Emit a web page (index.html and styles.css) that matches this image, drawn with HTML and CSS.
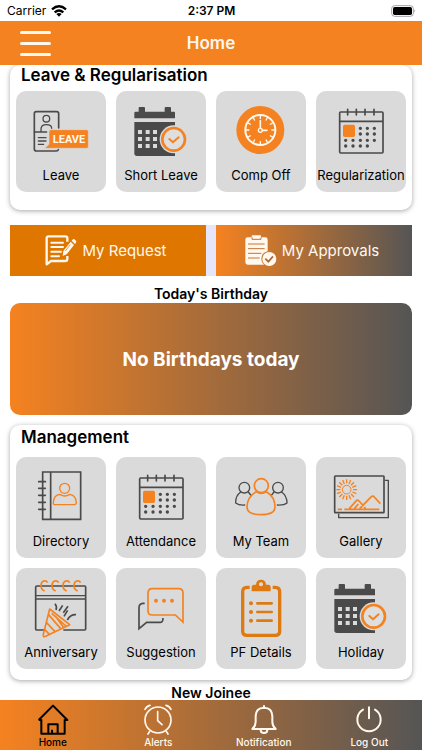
FILE: index.html
```html
<!DOCTYPE html>
<html lang="en">
<head>
<meta charset="utf-8">
<meta name="viewport" content="width=device-width, initial-scale=1">
<title>Home</title>
<link rel="stylesheet" href="styles.css">
</head>
<body>
<svg class="sprite" aria-hidden="true">
  <symbol id="calendar-check" viewBox="393 123 180 180">
    <g fill="#4a4a4b">
      <path d="M403 158Q403 155 407 155H416V144Q416 141 419 141H432Q435 141 435 144V155H494V144Q494 141 497 141H510Q513 141 513 144V155H522Q525 155 525 158V175H403Z"/>
      <path d="M403 186H525V288H411Q403 288 403 280Z"/>
    </g>
    <path fill="#dadada" d="M414 210h12v12h-12zM437 210h12v12h-12zM459 210h12v12h-12zM414 231h12v12h-12zM437 231h12v12h-12zM459 231h12v12h-12zM414 252h12v12h-12zM437 252h12v12h-12zM459 252h12v12h-12z"/>
    <circle cx="521" cy="238" r="42" fill="#dadada"/>
    <circle cx="521" cy="238" r="34" fill="#dedede" stroke="#f58220" stroke-width="8"/>
    <path d="M508 237L519 247L536 232" fill="none" stroke="#f58220" stroke-width="6" stroke-linecap="round" stroke-linejoin="round"/>
  </symbol>
  <symbol id="calendar-dots" viewBox="363 123 180 180">
    <g fill="none" stroke="#4a4a4b" stroke-width="5">
      <rect x="389" y="156" width="130" height="123" rx="3"/>
      <path d="M389 184H519"/>
      <path stroke-linecap="round" d="M413 148V165M439 148V165M465 148V165M492 148V165"/>
      <path stroke-width="10" stroke-linecap="round" d="M451 205h.1M472 205h.1M493 205h.1M451 222h.1M472 222h.1M493 222h.1M407 241h.1M429 241h.1M451 241h.1M472 241h.1M493 241h.1M407 258h.1M429 258h.1M451 258h.1M472 258h.1"/>
    </g>
    <rect x="399" y="194" width="36" height="37" rx="5" fill="#f58220"/>
  </symbol>
</svg>

<div class="app">
  <div class="status">
    <div class="carrier">Carrier
      <svg class="wifi" viewBox="0 0 48 36" aria-hidden="true">
        <g fill="none" stroke="#000" stroke-width="7"><path d="M3 13Q24-5 45 13"/><path d="M11 22Q24 11 37 22"/></g>
        <path d="M24 35L16 27Q24 21 32 27Z"/>
      </svg>
    </div>
    <div class="clock">2:37 PM</div>
    <div class="power">
      <svg class="battery" viewBox="0 0 75 36" aria-hidden="true">
        <rect x="2" y="2" width="65" height="32" rx="9" fill="none" stroke="#a3a3a3" stroke-width="3"/>
        <rect x="6" y="6" width="57" height="24" rx="5"/><path d="M70 13Q75 18 70 23Z" fill="#a3a3a3"/>
      </svg>
    </div>
  </div>

  <header class="topbar">
    <button class="menu" type="button" aria-label="Menu"><span></span><span></span><span></span></button>
    <h1>Home</h1>
  </header>

  <main>
    <section class="card card-leave">
      <h2>Leave &amp; Regularisation</h2>
      <div class="tiles">
        <button class="tile" type="button">
          <svg viewBox="93 123 180 180" aria-hidden="true">
            <g fill="none" stroke="#4a4a4b" stroke-width="5" stroke-linecap="round">
              <path d="M175 269Q174 273 169 273H109Q103 273 103 267V161Q103 155 109 155H170Q176 155 176 161V204"/>
              <circle cx="139" cy="176" r="10" stroke-width="4"/>
              <path stroke-width="4" d="M123 213V208Q123 194 139 194T155 205M103 216H140M115 233H138M115 243H138M115 253H131"/>
            </g>
            <path fill="#f58220" stroke="#dadada" stroke-width="2" d="M153 209H260Q265 209 265 214V260Q265 265 260 265H134L147 253V215Q147 209 153 209Z"/>
            <text class="leave-word" x="207" y="249" text-anchor="middle">LEAVE</text>
          </svg>
          <span>Leave</span>
        </button>
        <button class="tile" type="button"><svg aria-hidden="true"><use href="#calendar-check"/></svg><span>Short Leave</span></button>
        <button class="tile" type="button">
          <svg viewBox="63 123 180 180" aria-hidden="true">
            <circle cx="151" cy="210" r="72" fill="#f58220"/>
            <g fill="none" stroke="#fff8ec" stroke-width="5">
              <circle cx="151" cy="210" r="45" stroke-width="6"/>
              <circle cx="151" cy="211" r="6" stroke-width="4"/>
              <path d="M151 182V205M157 211H171" stroke-linecap="round"/>
              <path stroke-width="4" d="M151 167V177M151 243V253M108 210H118M184 210H194M129.500 172.800L134.500 181.400M167.500 238.600L172.500 247.200M113.800 188.500L122.400 193.500M179.600 226.500L188.200 231.500M113.800 231.500L122.400 226.500M179.600 193.500L188.200 188.500M129.500 247.200L134.500 238.600M167.500 181.400L172.500 172.800"/>
            </g>
          </svg>
          <span>Comp Off</span>
        </button>
        <button class="tile" type="button"><svg aria-hidden="true"><use href="#calendar-dots"/></svg><span>Regularization</span></button>
      </div>
    </section>

    <div class="actions">
      <button class="action request" type="button">
        <svg viewBox="130 74 96 96" aria-hidden="true">
          <g fill="none" stroke="#fff8ee" stroke-width="7" stroke-linejoin="round">
            <path d="M197 94V83Q197 78 191 78H141Q135 78 135 84V162L148 152H190Q197 152 197 145V137"/>
            <path stroke-linecap="round" stroke-width="6" d="M149 97H184M149 110H184M149 124H178M149 138H172"/>
          </g>
          <path fill="#fff8ee" d="M207 94L217 104L195 132L183 137L185 122ZM210 91L214 87Q217 85 220 88L223 91Q225 94 223 97L220 101Z"/>
          <path d="M206 103L191 122" stroke="#de7600" stroke-width="2"/>
        </svg>
        My Request
      </button>
      <button class="action approvals" type="button">
        <svg viewBox="730 74 96 96" aria-hidden="true">
          <path fill="#fff8ee" d="M738 81H750V77Q750 75 752 75H776Q778 75 778 77V81H791Q798 81 798 88V123Q779 127 779 146Q779 157 787 163H738Q731 163 731 156V88Q731 81 738 81Z"/>
          <path d="M751 81V87H778V81M739 101H789M739 115H789M739 129H779M739 143H774" fill="none" stroke="#c97331" stroke-width="3"/>
          <circle cx="803" cy="146" r="21" fill="#fff8ee"/>
          <path d="M791 145L800 154L814 138" fill="none" stroke="#a66a3c" stroke-width="5"/>
        </svg>
        My Approvals
      </button>
    </div>

    <h3>Today's Birthday</h3>
    <div class="birthday">No Birthdays today</div>

    <section class="card card-management">
      <h2>Management</h2>
      <div class="tiles">
        <button class="tile" type="button">
          <svg viewBox="93 81 180 180" aria-hidden="true">
            <g fill="none" stroke="#4a4a4b" stroke-width="5">
              <path d="M128 96H242V238H128ZM152 96V238"/>
              <path stroke-linecap="round" d="M116 125H136M116 145H136M116 166H136M116 187H136M116 208H136"/>
            </g>
            <g fill="none" stroke="#f58220" stroke-width="4">
              <circle cx="194" cy="145" r="15"/>
              <path d="M165 194Q159 194 160 187Q161 165 180 163Q194 173 209 163Q227 165 229 187Q229 194 223 194Z"/>
            </g>
          </svg>
          <span>Directory</span>
        </button>
        <button class="tile" type="button"><svg aria-hidden="true"><use href="#calendar-dots"/></svg><span>Attendance</span></button>
        <button class="tile" type="button">
          <svg viewBox="63 81 180 180" aria-hidden="true">
            <g fill="none" stroke="#4a4a4b" stroke-width="4" stroke-linecap="round">
              <circle cx="103" cy="143" r="16"/><circle cx="204" cy="143" r="16"/>
              <path d="M92 156Q76 168 77 189Q86 196 104 195M115 156L122 165M215 156Q231 168 231 189Q222 196 202 195M192 156L185 165"/>
            </g>
            <g fill="none" stroke="#f58220" stroke-width="5">
              <circle cx="154" cy="137" r="21"/>
              <path d="M139 155Q112 170 111 201Q111 224 153 224T195 201Q195 170 169 155Q154 166 139 155Z"/>
            </g>
          </svg>
          <span>My Team</span>
        </button>
        <button class="tile" type="button">
          <svg viewBox="363 81 180 180" aria-hidden="true">
            <g fill="none" stroke="#4a4a4b" stroke-width="5" stroke-linejoin="round">
              <rect x="374" y="108" width="148" height="110" rx="2"/>
              <path stroke-width="4" d="M525 121H535V233H386V221"/>
            </g>
            <g fill="none" stroke="#f58220" stroke-width="4">
              <circle cx="410" cy="149" r="13" stroke-width="3"/>
              <path d="M410 118V130M410 168V180M379 149H391M429 149H441M388 127L397 136M423 162L432 171M432 127L423 136M397 162L388 171M398 120L403 132M417 166L422 178M422 120L417 132M403 166L398 178M381 137L393 142M427 156L439 161M381 161L393 156M427 142L439 137"/>
              <path d="M383 208H396M403 208H508M418 206L439 182Q443 179 447 183L459 196M433 206L445 192M449 206L484 170Q489 166 493 171L511 191M463 201L466 206" stroke-width="5"/>
            </g>
          </svg>
          <span>Gallery</span>
        </button>
        <button class="tile" type="button">
          <svg viewBox="93 54 180 180" aria-hidden="true">
            <g fill="none" stroke="#4a4a4b" stroke-width="5">
              <path d="M133 210H109Q107 210 107 207V82Q107 78 111 78H254Q257 78 257 82V207Q257 210 254 210H190"/>
              <path d="M107 107H257M107 117H257" stroke-width="4"/>
              <path d="M165 131Q172 140 168 150M188 136L177 153M204 139L190 158M203 151L192 169M228 164Q211 163 202 180"/>
            </g>
            <g fill="none" stroke="#f58220" stroke-width="5" stroke-linejoin="round">
              <path d="M143 68Q139 61 131 63Q123 66 123 77T134 93M176 68Q172 61 164 63Q156 66 156 77T167 93M209 68Q205 61 197 63Q189 66 189 77T200 93M242 68Q238 61 230 63Q222 66 222 77T233 93"/>
              <path fill="#dadada" d="M149 147L209 194L137 229Q128 233 130 223Z"/>
              <path d="M145 163L182 206M139 187L165 215M134 208L148 223M155 160L198 198M166 168L192 204"/>
            </g>
          </svg>
          <span>Anniversary</span>
        </button>
        <button class="tile" type="button">
          <svg viewBox="393 54 180 180" aria-hidden="true">
            <path d="M434 130H429Q417 131 417 143V206L440 187H482Q489 187 489 174" fill="none" stroke="#4a4a4b" stroke-width="5"/>
            <path d="M457 86H536Q549 86 549 99V186L526 165H457Q444 165 444 152V99Q444 86 457 86Z" fill="none" stroke="#f58220" stroke-width="5"/>
            <g fill="#f58220"><circle cx="468" cy="122" r="6"/><circle cx="492" cy="122" r="6"/><circle cx="516" cy="122" r="6"/></g>
          </svg>
          <span>Suggestion</span>
        </button>
        <button class="tile" type="button">
          <svg viewBox="63 54 180 180" aria-hidden="true">
            <g fill="none" stroke="#de7a12" stroke-linecap="round">
              <path stroke-width="10" stroke-linecap="butt" d="M119 82H111Q98 82 98 95V213Q98 226 111 226H196Q209 226 209 213V95Q209 82 196 82H188"/>
              <path stroke-width="8" d="M142 130H185M142 156H185M142 182H185"/>
              <path stroke-width="12" d="M123 130h.1M123 156h.1M123 182h.1"/>
            </g>
            <path fill="#de7a12" fill-rule="evenodd" d="M125 94V82Q125 74 133 74H138Q139 59 153 59T168 74H174Q182 74 182 82V94ZM153 67a6 6 0 1 0 .1 0Z"/>
          </svg>
          <span>PF Details</span>
        </button>
        <button class="tile" type="button"><svg aria-hidden="true"><use href="#calendar-check"/></svg><span>Holiday</span></button>
      </div>
    </section>

    <h3 class="joinee">New Joinee</h3>
  </main>

  <nav class="tabs">
    <a class="current" href="#home">
      <svg viewBox="0 0 96 96" aria-hidden="true"><g fill="none" stroke="currentColor" stroke-width="6" stroke-linejoin="round"><path d="M13 49V92H83V49M5 51L48 8L91 51H83M5 51H13"/><path d="M34 92V64H62V92M45 92V80"/></g></svg>
      Home
    </a>
    <a href="#alerts">
      <svg viewBox="0 0 96 96" aria-hidden="true"><g fill="none" stroke="currentColor" stroke-width="5" stroke-linecap="round"><circle cx="48" cy="51" r="39"/><path d="M47 26V53L60 65M23 85L18 93M73 85L78 93M9 19Q14 9 24 7M72 7Q82 9 87 19"/></g></svg>
      Alerts
    </a>
    <a href="#notification">
      <svg viewBox="0 0 96 96" aria-hidden="true"><g fill="none" stroke="currentColor" stroke-width="6" stroke-linecap="round" stroke-linejoin="round"><path d="M48 9V13M13 78Q23 69 23 56V40Q23 15 48 14Q73 15 73 40V56Q73 69 83 78Z"/><path d="M38 80Q38 90 48 90T58 80"/></g></svg>
      Notification
    </a>
    <a href="#logout">
      <svg viewBox="0 0 96 96" aria-hidden="true"><g fill="none" stroke="currentColor" stroke-width="6" stroke-linecap="round"><path d="M48 13V46M30 20A35 35 0 1 0 66 20"/></g></svg>
      Log Out
    </a>
  </nav>
</div>
</body>
</html>
```
FILE: styles.css
```css
* {
  box-sizing: border-box;
}

body {
  margin: 0;
  background: #fff;
  color: #000;
  font-family: Inter, "Liberation Sans", sans-serif;
}

button {
  padding: 0;
  border: 0;
  color: inherit;
  font: inherit;
}

h1, h2, h3 {
  margin: 0;
  font-weight: 600;
}

.sprite {
  position: absolute;
  width: 0;
  height: 0;
}

.app {
  display: flex;
  flex-direction: column;
  height: 100vh;
}

.status {
  display: grid;
  grid-template-columns: 1fr auto 1fr;
  align-items: center;
  height: 21px;
  padding: 0 6px 0 7px;
  font-size: 12px;
}

.carrier {
  display: flex;
  align-items: center;
  gap: 5px;
}

.wifi {
  width: 16px;
  height: 12px;
}

.clock {
  font-weight: 600;
}

.power {
  display: flex;
  justify-content: flex-end;
}

.battery {
  width: 25px;
  height: 12px;
}

.topbar {
  display: grid;
  grid-template-columns: 1fr auto 1fr;
  align-items: center;
  height: 44px;
  padding: 0 20px;
  background: #f58220;
  color: #fff8ee;
}

.topbar h1 {
  font-size: 17px;
}

.menu {
  display: flex;
  flex-direction: column;
  gap: 8px;
  width: 31px;
  background: none;
}

.menu span {
  width: 100%;
  height: 3px;
  border-radius: 2px;
  background: #fff8ee;
}

main {
  flex: 1;
  min-height: 0;
  overflow: hidden;
  padding: 0 10px;
}

.card {
  padding: 0 6px;
  border-radius: 10px;
  background: #fff;
  box-shadow: 0 1px 5px rgba(0, 0, 0, 0.35);
}

.card h2 {
  padding-left: 5px;
  font-size: 17px;
  line-height: 20px;
}

.card-leave {
  padding-bottom: 18px;
}

.card-leave h2 {
  margin-bottom: 6px;
}

.card-management {
  margin-top: 10px;
  padding-top: 2px;
  padding-bottom: 11px;
}

.card-management h2 {
  margin-bottom: 10px;
}

.tiles {
  display: grid;
  grid-template-columns: repeat(4, minmax(0, 1fr));
  gap: 10px;
}

.tile {
  display: flex;
  flex-direction: column;
  align-items: center;
  gap: 4px;
  padding: 10px 0 7px;
  border-radius: 10px;
  background: #dadada;
  font-size: 13px;
  line-height: 20px;
  white-space: nowrap;
}

.tile svg {
  width: 60px;
  height: 60px;
}

.leave-word {
  fill: #fff8ee;
  font-family: Roboto, sans-serif;
  font-size: 33px;
  font-weight: 700;
}

.actions {
  display: grid;
  grid-template-columns: 1fr 1fr;
  gap: 10px;
  margin-top: 15px;
  background: #e6e6fa;
}

.action {
  display: flex;
  align-items: center;
  justify-content: center;
  gap: 5px;
  height: 51px;
  padding-right: 4px;
  color: #fff8ee;
  font-size: 15px;
}

.action svg {
  width: 32px;
  height: 32px;
}

.request {
  background: #de7600;
}

.approvals,
.birthday,
.tabs {
  background: linear-gradient(90deg, #f58220, #555);
}

h3 {
  margin-top: 9px;
  font-size: 14px;
  line-height: 18px;
  text-align: center;
}

.birthday {
  display: flex;
  align-items: center;
  justify-content: center;
  height: 112px;
  border-radius: 10px;
  color: #fff;
  font-size: 19px;
  font-weight: 700;
}

.joinee {
  margin-top: 4px;
}

.tabs {
  display: grid;
  grid-template-columns: repeat(4, 1fr);
  height: 50px;
}

.tabs a {
  display: flex;
  flex-direction: column;
  align-items: center;
  padding-top: 3px;
  color: #fff8ee;
  font-size: 10px;
  font-weight: 500;
  line-height: 14px;
  text-decoration: none;
}

.tabs svg {
  width: 32px;
  height: 32px;
}

.tabs .current {
  color: #000;
}
```
